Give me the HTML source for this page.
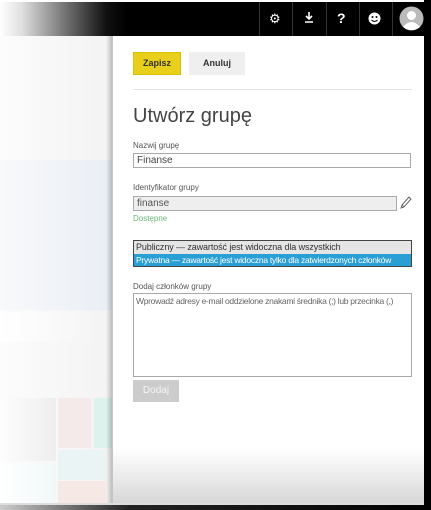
<!DOCTYPE html>
<html><head><meta charset="utf-8"><style>
*{margin:0;padding:0;box-sizing:border-box}
body{width:431px;height:510px;overflow:hidden;background:#fff;font-family:"Liberation Sans",sans-serif;position:relative}
.abs{position:absolute}
.lbl{position:absolute;left:133px;font-size:8px;color:#555}
.inp{position:absolute;left:133px;border:1px solid #aaa;font-size:10px;color:#444;padding:1px 3px;background:#fff}
</style></head><body>
<!-- background left -->
<div class="abs" style="left:0;top:35px;width:112px;height:470px;background:linear-gradient(90deg,#fcfcfc,#f3f3f3)"></div>
<div class="abs" style="left:0;top:160px;width:112px;height:150px;background:linear-gradient(90deg,#f8f9fb,#e9eef5)"></div>
<div class="abs" style="left:0;top:312px;width:112px;height:30px;background:linear-gradient(90deg,#fff,#f3f3f3)"></div>
<div class="abs" style="left:0;top:398px;width:56px;height:63px;background:linear-gradient(90deg,#fdfdfd,#eeeeee)"></div>
<div class="abs" style="left:58px;top:398px;width:33px;height:50px;background:#f5eaea"></div>
<div class="abs" style="left:94px;top:398px;width:18px;height:50px;background:#ddf1ed"></div>
<div class="abs" style="left:0;top:463px;width:56px;height:42px;background:linear-gradient(90deg,#fff,#f1f8f8)"></div>
<div class="abs" style="left:58px;top:450px;width:48px;height:30px;background:#eaf4f4"></div>
<div class="abs" style="left:58px;top:481px;width:48px;height:22px;background:#f5e8e5"></div>
<!-- top bar -->
<div class="abs" style="left:0;top:2px;width:424px;height:34px;background:linear-gradient(90deg,#fff 0,#e0e0e0 5%,#777 15%,#111 25%,#000 30%,#000)"></div>
<div class="abs" style="left:259px;top:2px;width:1px;height:34px;background:#333"></div>
<div class="abs" style="left:292px;top:2px;width:1px;height:34px;background:#333"></div>
<div class="abs" style="left:326px;top:2px;width:1px;height:34px;background:#333"></div>
<div class="abs" style="left:359px;top:2px;width:1px;height:34px;background:#333"></div>
<div class="abs" style="left:392px;top:2px;width:1px;height:34px;background:#333"></div>
<div class="abs" style="left:269px;top:12px;color:#fff;font-size:13px;line-height:13px">⚙</div>
<svg class="abs" style="left:304px;top:12px" width="10" height="11"><path d="M5 0v7M2 4l3 3 3-3M1 10h8" stroke="#fff" stroke-width="1.6" fill="none"/></svg>
<div class="abs" style="left:337px;top:10px;color:#fff;font-size:14px;font-weight:bold">?</div>
<svg class="abs" style="left:368px;top:12px" width="13" height="13"><circle cx="6.5" cy="6.5" r="6" fill="#fff"/><circle cx="4.5" cy="5" r="1" fill="#000"/><circle cx="8.5" cy="5" r="1" fill="#000"/><path d="M3.5 8q3 3 6 0" stroke="#000" fill="none"/></svg>
<svg class="abs" style="left:399px;top:6px" width="25" height="25"><circle cx="12.5" cy="12.5" r="12" fill="#bbb"/><circle cx="12.5" cy="9.5" r="4.5" fill="#fff"/><path d="M4 21q8.5-10 17 0q-8.5 6-17 0z" fill="#fff"/></svg>
<!-- panel -->
<div class="abs" style="left:106px;top:36px;width:7px;height:469px;background:linear-gradient(90deg,rgba(0,0,0,0),rgba(0,0,0,.25))"></div>
<div class="abs" style="left:113px;top:36px;width:311px;height:469px;background:linear-gradient(180deg,#fff 0,#fff 88%,#d6d6d6 100%)"></div>
<div class="abs" style="left:133px;top:52px;width:48px;height:23px;background:#e8cf1c;border:1px solid #d9c000;font-size:9px;font-weight:bold;color:#333;text-align:center;line-height:21px">Zapisz</div>
<div class="abs" style="left:189px;top:52px;width:56px;height:23px;background:#efefef;font-size:9px;font-weight:bold;color:#333;text-align:center;line-height:23px">Anuluj</div>
<div class="abs" style="left:133px;top:89px;width:279px;height:1px;background:#e4e4e4"></div>
<div class="abs" style="left:133px;top:105px;font-size:20px;color:#444">Utwórz grupę</div>
<div class="lbl" style="top:141px">Nazwij grupę</div>
<div class="inp" style="top:153px;width:278px;height:15px;line-height:11px">Finanse</div>
<div class="lbl" style="top:183px">Identyfikator grupy</div>
<div class="inp" style="top:196px;width:264px;height:15px;line-height:11px;background:#eee;color:#555">finanse</div>
<svg class="abs" style="left:400px;top:196px" width="12" height="13"><path d="M1 12l1-3 7-8 2 2-7 8z M2 9l2 2" stroke="#666" fill="none"/></svg>
<div class="abs" style="left:133px;top:214px;font-size:8px;color:#6cb87a">Dostępne</div>
<div class="abs" style="left:133px;top:240px;width:279px;height:27px;border:1px solid #444;background:#e5e5e5">
<div style="height:13px;font-size:9px;color:#333;line-height:13px;padding-left:2px;letter-spacing:-.1px">Publiczny — zawartość jest widoczna dla wszystkich</div>
<div style="height:12px;font-size:8.5px;color:#fff;background:#2a9fd6;line-height:12px;padding-left:2px;white-space:nowrap;overflow:hidden;letter-spacing:-.25px">Prywatna — zawartość jest widoczna tylko dla zatwierdzonych członków</div>
</div>
<div class="lbl" style="top:282px">Dodaj członków grupy</div>
<div class="inp" style="top:293px;width:279px;height:84px;font-size:8.5px;color:#666;line-height:12px;padding:1px 2px;white-space:nowrap;letter-spacing:-.3px">Wprowadź adresy e-mail oddzielone znakami średnika (;) lub przecinka (,)</div>
<div class="abs" style="left:133px;top:380px;width:46px;height:22px;background:#ccc;color:#f4f4f4;font-size:10px;text-align:center;line-height:22px">Dodaj</div>
<!-- frame edges -->
<div class="abs" style="left:0;top:503px;width:424px;height:2px;background:#ddd"></div>
<div class="abs" style="left:0;top:505px;width:431px;height:5px;background:linear-gradient(90deg,#ccc,#222 30%,#000)"></div>
<div class="abs" style="left:424px;top:0;width:7px;height:510px;background:#000"></div>
</body></html>
